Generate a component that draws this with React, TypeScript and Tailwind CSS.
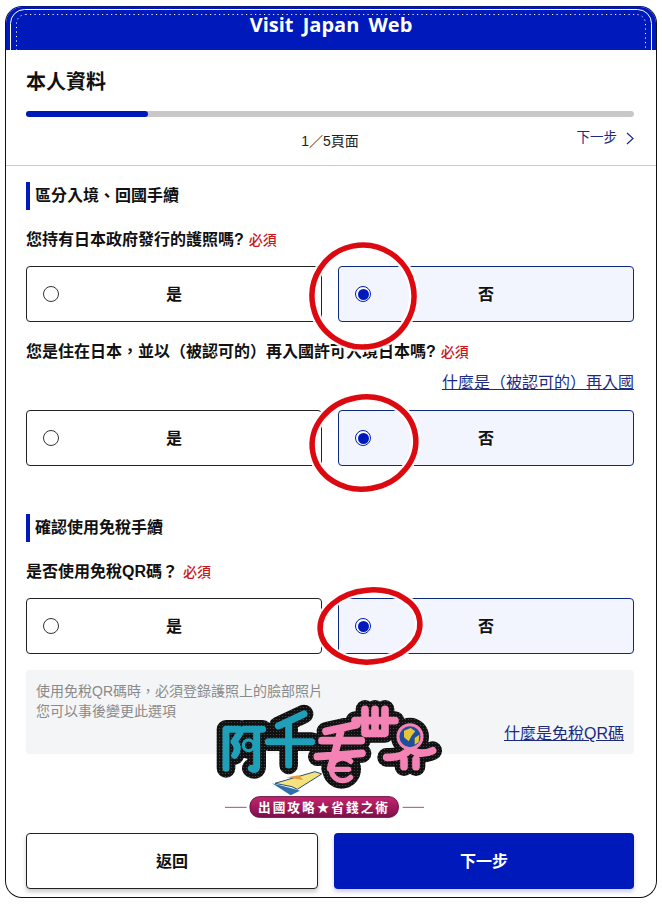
const cjk = "font-['Liberation_Sans','Noto_Sans_CJK_TC',sans-serif]"

function SectionTitle({ children }: { children: any }) {
    return (
        <h3 className="h-[28px] border-l-[4px] border-[#0019ba] pl-[5px] text-[16px] font-bold leading-[27px] text-[#111]">{children}</h3>
    )
}

function Question({ text }: { text: string }) {
    return (
        <p className="h-[20px] text-[16px] font-bold leading-[20px] text-[#111]">
            {text}
            <span className="ml-[5px] text-[14px] font-medium text-[#c8161d]">必須</span>
        </p>
    )
}

function Option({ label, checked }: { label: string, checked?: boolean }) {
    return (
        <div className={`relative flex h-[56px] items-center justify-center rounded-[4px] border pt-[1px] text-[16px] font-bold text-[#111] ${checked ? "border-[#0b2a7c] bg-[#f2f4fe]" : "border-[#222] bg-white"}`}>
            <span className={`absolute left-[16px] top-[19px] flex h-[16px] w-[16px] items-center justify-center rounded-full border bg-white ${checked ? "border-[#0019ba]" : "border-[#333]"}`}>
                {checked && <span className="h-[11px] w-[11px] rounded-full bg-[#0019ba]" />}
            </span>
            {label}
        </div>
    )
}

function Options() {
    return (
        <div className="grid grid-cols-[296px_296px] gap-[16px]">
            <Option label="是" />
            <Option label="否" checked />
        </div>
    )
}

function RedRing({ className, rx, ry, tilt }: { className: string, rx: number, ry: number, tilt: number }) {
    const w = rx * 2 + 20
    const h = ry * 2 + 20
    return (
        <svg className={`absolute ${className}`} width={w} height={h} viewBox={`0 0 ${w} ${h}`} fill="none">
            <ellipse cx={w / 2} cy={h / 2} rx={rx} ry={ry} stroke="#fff" strokeWidth="10" strokeOpacity="0.9" transform={`rotate(${tilt} ${w / 2} ${h / 2})`} />
            <ellipse cx={w / 2} cy={h / 2} rx={rx} ry={ry} stroke="#dc0a10" strokeWidth="5.5" transform={`rotate(${tilt} ${w / 2} ${h / 2})`} />
        </svg>
    )
}

function Logo() {
    const teal = "M78 88V205M78 88H118Q126 90 116 105L102 125Q120 142 104 166M132 88H188M170 88V198Q170 214 154 205M205 125H335M235 78L312 42M266 70V195"
    const pink = "M378 94L470 74M366 122H484M352 170L486 160M425 85L392 205M465 62H585M495 28V100H555V28M525 28V90M560 172Q610 175 632 145Q655 170 698 152M612 178V200M648 178V200"
    return (
        <svg className="absolute left-[200px] top-[700px]" width="260" height="130" viewBox="0 0 780 390" fill="none">
            <defs>
                <pattern id="logoDots" width="9" height="9" patternUnits="userSpaceOnUse">
                    <rect width="9" height="9" fill="#111" />
                    <circle cx="4.5" cy="4.5" r="1.8" fill="#4a4a4a" />
                </pattern>
                <linearGradient id="logoPill" x1="0" y1="0" x2="0" y2="1">
                    <stop offset="0" stopColor="#c4266e" />
                    <stop offset="1" stopColor="#7e0f4c" />
                </linearGradient>
            </defs>
            <g strokeLinecap="round" strokeLinejoin="round">
                <path d={teal} stroke="url(#logoDots)" strokeWidth="56" />
                <circle cx="146" cy="136" r="18" fill="#111" stroke="url(#logoDots)" strokeWidth="44" />
                <path d={pink} stroke="url(#logoDots)" strokeWidth="56" />
                <circle cx="425" cy="208" r="36" fill="#111" stroke="url(#logoDots)" strokeWidth="44" />
                <circle cx="630" cy="110" r="38" fill="#111" stroke="url(#logoDots)" strokeWidth="38" />
                <path d={teal} stroke="#1f9fb8" strokeWidth="21" />
                <circle cx="146" cy="136" r="16" stroke="#1f9fb8" strokeWidth="10" />
                <path d={pink} stroke="#f283b4" strokeWidth="23" />
                <path d="M398 208H446M452 184A34 34 0 1 0 452 232" stroke="#f283b4" strokeWidth="16" />
            </g>
            <circle cx="630" cy="110" r="36" fill="#1c4f9c" stroke="#f283b4" strokeWidth="9" />
            <path d="M612 92L632 84L646 94L636 106L626 124L612 112ZM644 114L658 104L656 126L644 134Z" fill="#e7c437" />
            <path d="M225 250L345 215L365 222L292 268L276 260Z" fill="#f6e27a" stroke="#24507c" strokeWidth="3" />
            <path d="M216 250L272 286L300 272L280 266Z" fill="#2f6fa8" />
            <path d="M260 232L296 226L310 240Z" fill="#e89a3c" />
            <path d="M75 322H140M608 322H672" stroke="#c0446f" strokeWidth="3" />
            <rect x="150" y="290" width="445" height="62" rx="28" fill="url(#logoPill)" stroke="#6d0d42" strokeWidth="3" />
            <text x="372" y="336" textAnchor="middle" fill="#fff" fontSize="38" fontWeight="700" letterSpacing="6" fontFamily="'Noto Sans CJK TC',sans-serif">出國攻略★省錢之術</text>
        </svg>
    )
}

export default function App() {
    return (
        <div className={`relative h-[904px] w-[662px] overflow-hidden bg-white ${cjk}`}>
            <div className="absolute left-[5px] top-[6px] h-[892px] w-[652px] overflow-hidden rounded-[17px] border border-[#111] border-t-[#0a1585]">
                <header className="relative h-[43px] overflow-hidden bg-[#0019ba] text-center font-['Open_Sans',sans-serif] text-[20px] font-bold leading-[36px] text-white [word-spacing:4px]">
                    <svg className="absolute left-0 top-0" width="650" height="43" viewBox="0 0 650 43" fill="none">
                        <rect x="4.5" y="2.5" width="641" height="70" rx="14" stroke="#fff" />
                        <rect x="10.5" y="7.5" width="629" height="70" rx="9" stroke="#fff" strokeDasharray="1.2 3.3" />
                    </svg>
                    <span className="relative">Visit Japan Web</span>
                </header>
                <div className="pl-[20px] pr-[22px]">
                    <h2 className="mt-[19px] text-[20px] font-bold leading-[26px] text-[#111]">本人資料</h2>
                    <div className="mt-[16px] h-[6px] rounded-full bg-[#c8c8c8]">
                        <div className="h-full w-[122px] rounded-full bg-[#0019ba]" />
                    </div>
                    <div className="relative mt-[12px] h-[24px] text-center">
                        <span className="text-[14px] leading-[22px] text-[#222]">{"1\uFF0F5頁面"}</span>
                        <span className="absolute right-0 top-[-1px] flex items-center gap-[9px] text-[13.5px] leading-[20px] text-[#1b2b83]">
                            下一步
                            <svg width="8" height="13" viewBox="0 0 8 13" fill="none"><path d="M1 1L7 6.5L1 12" stroke="#1b2b83" strokeWidth="1.2" /></svg>
                        </span>
                    </div>
                </div>
                <div className="mt-[12px] border-t border-[#ccc]" />
                <main className="pl-[20px] pr-[22px] pt-[16px]">
                    <SectionTitle>區分入境、回國手續</SectionTitle>
                    <div className="mt-[20px]"><Question text="您持有日本政府發行的護照嗎?" /></div>
                    <div className="mt-[16px]"><Options /></div>
                    <div className="mt-[20px]"><Question text={"您是住在日本\uFF0C並以\uFF08被認可的\uFF09再入國許可入境日本嗎?"} /></div>
                    <div className="mt-[11px] h-[20px] text-right text-[16px] leading-[20px] text-[#1b2b83] underline">{"什麼是\uFF08被認可的\uFF09再入國"}</div>
                    <div className="mt-[17px]"><Options /></div>
                    <div className="mt-[48px]"><SectionTitle>確認使用免稅手續</SectionTitle></div>
                    <div className="mt-[20px]"><Question text={"是否使用免稅QR碼\uFF1F"} /></div>
                    <div className="mt-[16px]"><Options /></div>
                    <div className="relative mt-[16px] h-[84px] rounded-[4px] bg-[#f3f5f7] px-[10px] pt-[11px] text-[14px] leading-[20px] text-[#8a8a8a]">
                        <p>{"使用免稅QR碼時\uFF0C必須登錄護照上的臉部照片"}</p>
                        <p>您可以事後變更此選項</p>
                        <span className="absolute bottom-[10px] right-[10px] text-[16px] leading-[20px] text-[#1b2b83] underline">什麼是免稅QR碼</span>
                    </div>
                    <div className="mt-[79px] grid grid-cols-[292px_300px] gap-[16px]">
                        <button className="h-[56px] rounded-[4px] border border-[#222] bg-white pt-[2px] text-[16px] font-bold text-[#111] shadow-[0_3px_4px_rgba(0,0,0,0.2)]">返回</button>
                        <button className="h-[56px] rounded-[4px] bg-[#0019ba] pt-[2px] text-[16px] font-bold text-white shadow-[0_3px_4px_rgba(0,25,186,0.2)]">下一步</button>
                    </div>
                </main>
            </div>
            <RedRing className="left-[302px] top-[235px]" rx={51} ry={51} tilt={-12} />
            <RedRing className="left-[302px] top-[387px]" rx={52} ry={46} tilt={-10} />
            <RedRing className="left-[310px] top-[580px]" rx={50} ry={36} tilt={-5} />
            <Logo />
        </div>
    )
}
